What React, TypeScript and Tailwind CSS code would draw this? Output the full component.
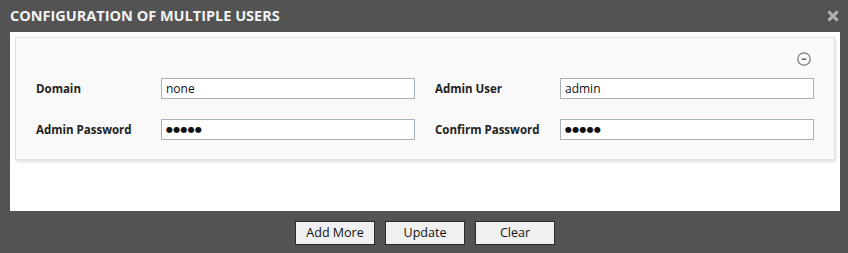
import type { ReactNode } from 'react';

function Field({ label, value, masked = false }: { label: string; value: string; masked?: boolean }) {
  return (
    <div className="flex items-center">
      <label className="w-[125px] text-[11.5px] font-bold text-[#222]">{label}</label>
      <input
        type="text"
        readOnly={masked}
        defaultValue={masked ? '●●●●●' : value}
        className={
          masked
            ? 'h-[21px] w-[254px] border border-[#a9b0bd] bg-white px-[4px] text-[8px] tracking-[0.3px] text-[#111] outline-none [font-family:"DejaVu_Sans",sans-serif]'
            : 'h-[21px] w-[254px] border border-[#a9b0bd] bg-white px-[4px] text-[12px] text-[#111] outline-none'
        }
      />
    </div>
  );
}

function Button({ children }: { children: ReactNode }) {
  return (
    <button className="h-[24px] w-[80px] border border-[#2a2a2a] bg-[#f0f0f0] text-[12.5px] text-[#111]">
      {children}
    </button>
  );
}

export default function App() {
  return (
    <div
      className="flex h-[253px] w-[848px] flex-col bg-[#535353]"
      style={{ fontFamily: '"Open Sans", "DejaVu Sans", sans-serif' }}
    >
      <div className="flex h-[32px] items-center justify-between pl-[10px] pr-[9px]">
        <h1 className="text-[14.5px] font-bold text-[#f2f2f2]">CONFIGURATION OF MULTIPLE USERS</h1>
        <svg width="12" height="12" viewBox="0 0 12 12" className="mt-[-1px]">
          <path d="M1.5 1.5 L10.5 10.5 M10.5 1.5 L1.5 10.5" stroke="#b5b5b5" strokeWidth="3" />
        </svg>
      </div>

      <div className="ml-[10px] h-[179px] w-[830px] bg-white pl-[5px] pt-[5px]">
        <div className="h-[123px] w-[820px] border border-[#e2e2e2] bg-[#f9f9f9] shadow-[1px_2px_3px_rgba(0,0,0,0.12)]">
          <div className="flex justify-end pr-[23px] pt-[14px]">
            <svg width="14" height="14" viewBox="0 0 14 14">
              <circle cx="7" cy="7" r="6.2" fill="none" stroke="#7a7a7a" strokeWidth="1.2" />
              <path d="M4.8 7.2 H9.2" stroke="#555" strokeWidth="1.4" />
            </svg>
          </div>
          <div className="mt-[12px] grid grid-cols-[399px_1fr] gap-y-[20px] pl-[20px]">
            <Field label="Domain" value="none" />
            <Field label="Admin User" value="admin" />
            <Field label="Admin Password" value="admin" masked />
            <Field label="Confirm Password" value="admin" masked />
          </div>
        </div>
      </div>

      <div className="flex justify-center gap-[10px] pt-[10px] pl-[2px]">
        <Button>Add More</Button>
        <Button>Update</Button>
        <Button>Clear</Button>
      </div>
    </div>
  );
}
